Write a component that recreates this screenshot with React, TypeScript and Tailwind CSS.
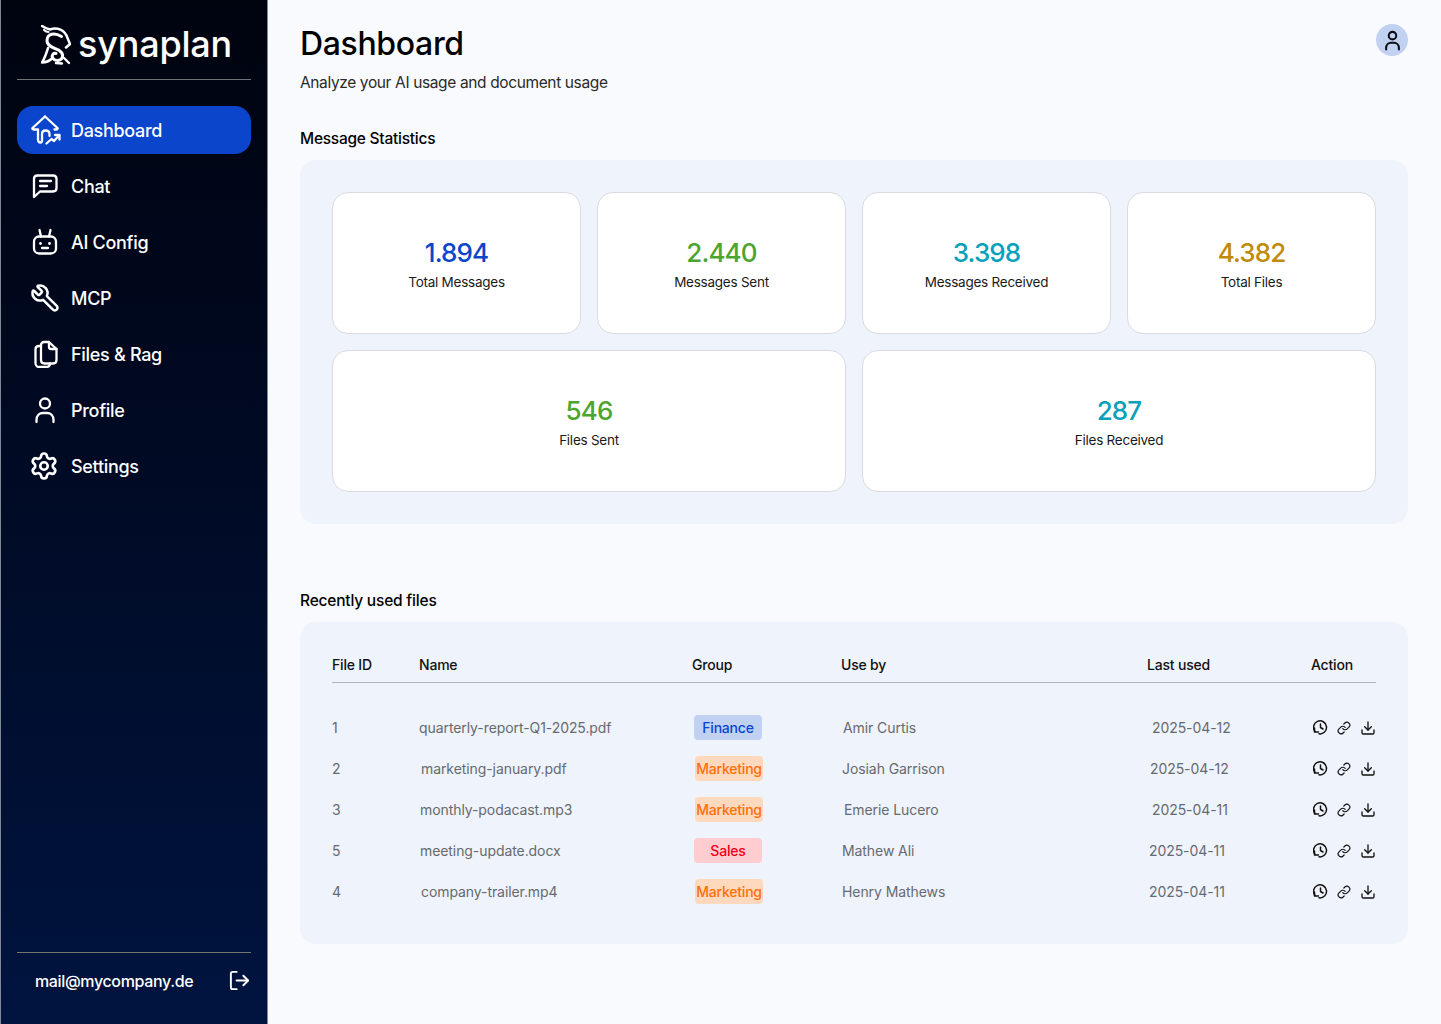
import React from "react";
import { Wrench, Settings, LogOut, Link, Download } from "lucide-react";

function Logo() {
  return (
    <svg width="30" height="40" viewBox="0 0 30 40" fill="none" stroke="white" strokeLinecap="round" strokeLinejoin="round" className="shrink-0">
      <path d="M1 1 C4 3 6 4 9 4.500 C16 1.500 24 5 26.500 13 L29 19 L25 22.500" strokeWidth="2.500" />
      <path d="M3 5 C4 6 6 7 7.500 7" strokeWidth="2.200" />
      <path d="M20.500 11.500 C13 7 6.500 9 6 15 C5.500 20 10 22 14 23.500 C20 25.500 23 29 21 33 C19 36.500 13 36 11.500 32.500 C10.500 30 12.500 27.500 15 28.500" strokeWidth="3" />
      <path d="M7 23 C5.500 28 4 33 1 37.500 C5 37.500 9 35.500 11.500 33" strokeWidth="2.600" />
      <path d="M15 38 L21 38.500 M23 33 L28 38" strokeWidth="2.400" />
    </svg>
  );
}

function HomeChart() {
  return (
    <svg width="30" height="30" viewBox="0 0 30 30" fill="none" stroke="white" strokeWidth="2.300" strokeLinecap="round" strokeLinejoin="round" className="shrink-0">
      <path d="M14 1.500 L1.500 13 C1 14 2 14.500 3 14.500 H7 V24.500 C7 26.500 8 27.500 9.500 27.500 C10.500 27.500 11 26.500 11 25.500 V19 C11 16.500 12.500 15.500 14.500 15.500 C16.500 15.500 18.500 16.500 18.500 19 V21" />
      <path d="M14 1.500 L26.500 13 C27 14 26 14.500 25 14.500 H23.500" />
      <path d="M15.500 28.500 L20.500 24 L23 26 L28 20.500" />
      <path d="M24 20 H28.500 V24.500" />
    </svg>
  );
}

function ChatIcon() {
  return (
    <svg width="28" height="28" viewBox="0 0 28 28" fill="none" stroke="white" strokeWidth="2.300" strokeLinecap="round" strokeLinejoin="round">
      <path d="M3 25 V7 C3 5 4.500 3.500 6.500 3.500 H22 C24 3.500 25.500 5 25.500 7 V16 C25.500 18 24 19.500 22 19.500 H9 Z" />
      <path d="M9 9 H20 M9 14 H16" />
    </svg>
  );
}

function BotIcon() {
  return (
    <svg width="28" height="28" viewBox="0 0 28 28" fill="none" stroke="white" strokeWidth="2.300" strokeLinecap="round" strokeLinejoin="round">
      <path d="M8.500 2 L10 8.500 M19.500 2 L18 8.500" />
      <rect x="3" y="8.500" width="22" height="17" rx="5" />
      <path d="M11 20 H17" />
      <circle cx="9.500" cy="15.500" r="1.400" fill="white" stroke="none" />
      <circle cx="18.500" cy="15.500" r="1.400" fill="white" stroke="none" />
    </svg>
  );
}

function FilesIcon() {
  return (
    <svg width="28" height="28" viewBox="0 0 28 28" fill="none" stroke="white" strokeWidth="2.300" strokeLinecap="round" strokeLinejoin="round">
      <path d="M10 6 H8 C5.500 6 4.500 7.500 4.500 9.500 V23 C4.500 25 6 27 8 27 H15 C17.500 27 19 25.500 19 23.500" />
      <path d="M10 5 C10 3.500 11 2 13 2 H18 L25.500 9 V20 C25.500 22 24 23.500 22 23.500 H13.500 C11.500 23.500 10 22 10 20 Z" />
      <path d="M18 2 V7 C18 8.200 19 9 20 9 H25.500" />
    </svg>
  );
}

function UserIcon({ size = 28, color = "white", sw = 2.3 }: { size?: number; color?: string; sw?: number }) {
  return (
    <svg width={size} height={size} viewBox="0 0 28 28" fill="none" stroke={color} strokeWidth={sw} strokeLinecap="round" strokeLinejoin="round">
      <circle cx="14" cy="7.500" r="5" />
      <path d="M5.500 26 V24 C5.500 19.500 8.500 17 12 17 H16 C19.500 17 22.500 19.500 22.500 24 V26" />
    </svg>
  );
}

function HistoryIcon() {
  return (
    <svg width="15" height="15" viewBox="0 0 15 15" fill="none" stroke="#111" strokeWidth="1.500" strokeLinecap="round" strokeLinejoin="round" className="shrink-0">
      <path d="M6 13.800 A6.500 6.500 0 1 0 2 11.500" />
      <path d="M1.500 8 V12 H5.500" />
      <path d="M7.500 4 V7.500 L10 9" />
    </svg>
  );
}

const nav = [
  { label: "Chat", icon: <ChatIcon /> },
  { label: "AI Config", icon: <BotIcon /> },
  { label: "MCP", icon: <Wrench size={30} strokeWidth={2} color="white" className="shrink-0 -scale-x-100" /> },
  { label: "Files & Rag", icon: <FilesIcon /> },
  { label: "Profile", icon: <UserIcon /> },
  { label: "Settings", icon: <Settings size={30} strokeWidth={2.100} color="white" className="shrink-0 -translate-x-[1px]" /> },
];

const stats = [
  { value: "1.894", label: "Total Messages", color: "text-[#0a45cc]", span: "" },
  { value: "2.440", label: "Messages Sent", color: "text-[#4ca52e]", span: "" },
  { value: "3.398", label: "Messages Received", color: "text-[#08a0bb]", span: "" },
  { value: "4.382", label: "Total Files", color: "text-[#c08a0a]", span: "" },
  { value: "546", label: "Files Sent", color: "text-[#4ca52e]", span: "col-span-2" },
  { value: "287", label: "Files Received", color: "text-[#08a0bb]", span: "col-span-2" },
];

const badgeFinance = "bg-[#c1d1f2] text-[#0a45cc]";
const badgeMarketing = "bg-[#ffd9bd] text-[#ff6f0a]";
const badgeSales = "bg-[#ffccd0] text-[#f00018]";

const rows = [
  { id: "1", name: "quarterly-report-Q1-2025.pdf", nameOff: "pl-0", group: "Finance", badge: badgeFinance, badgeOff: "ml-[2px]", user: "Amir Curtis", userOff: "pl-[2px]", date: "2025-04-12", dateOff: "pl-[5px]" },
  { id: "2", name: "marketing-january.pdf", nameOff: "pl-[2px]", group: "Marketing", badge: badgeMarketing, badgeOff: "ml-[3px]", user: "Josiah Garrison", userOff: "pl-[1px]", date: "2025-04-12", dateOff: "pl-[3px]" },
  { id: "3", name: "monthly-podacast.mp3", nameOff: "pl-[1px]", group: "Marketing", badge: badgeMarketing, badgeOff: "ml-[3px]", user: "Emerie Lucero", userOff: "pl-[3px]", date: "2025-04-11", dateOff: "pl-[5px]" },
  { id: "5", name: "meeting-update.docx", nameOff: "pl-[1px]", group: "Sales", badge: badgeSales, badgeOff: "ml-[2px]", user: "Mathew Ali", userOff: "pl-[1px]", date: "2025-04-11", dateOff: "pl-[2px]" },
  { id: "4", name: "company-trailer.mp4", nameOff: "pl-[2px]", group: "Marketing", badge: badgeMarketing, badgeOff: "ml-[3px]", user: "Henry Mathews", userOff: "pl-[1px]", date: "2025-04-11", dateOff: "pl-[2px]" },
];

const cols = "grid grid-cols-[87px_273px_149px_306px_164px_1fr] items-center";

export default function App() {
  return (
    <div className="flex min-h-[1024px] w-full bg-[#f9fafd] text-black font-['Inter','Liberation_Sans',sans-serif]">
      <aside className="flex w-[268px] shrink-0 flex-col border-x border-[#7f8694] bg-gradient-to-b from-[#00040f] to-[#001440] px-4 text-white">
        <div className="flex h-[80px] items-center justify-center gap-[7px] border-b border-[#6f7378] pl-[5px] pt-[10px]">
          <Logo />
          <span className="text-[36px] font-medium leading-none tracking-[-0.2px] pb-[2px]">synaplan</span>
        </div>
        <nav className="mt-[26px] flex flex-col gap-2">
          <div className="flex h-12 items-center gap-[10px] rounded-2xl bg-[#0a45cc] pl-[14px] text-[18px] font-medium tracking-[-0.3px]">
            <HomeChart />
            <span>Dashboard</span>
          </div>
          {nav.map((n) => (
            <div key={n.label} className="flex h-12 items-center gap-[12px] pl-[14px] text-[18px] font-medium tracking-[-0.3px]">
              <span className="flex h-[28px] w-[28px] items-center justify-center">{n.icon}</span>
              <span>{n.label}</span>
            </div>
          ))}
        </nav>
        <div className="mt-auto flex h-[72px] items-center justify-between border-t border-[#76776a] pb-[16px] pl-[18px] pr-[0px]">
          <span className="text-[16px] font-medium tracking-[-0.35px]">mail@mycompany.de</span>
          <LogOut size={23} strokeWidth={2} color="white" />
        </div>
      </aside>

      <main className="flex-1 pl-8 pr-[33px] pb-20">
        <header className="flex items-start justify-between pt-[24px]">
          <div>
            <h1 className="text-[32px] font-medium leading-[40px] tracking-[-0.35px]">Dashboard</h1>
            <p className="mt-[9px] text-[15.500px] leading-[20px] tracking-[-0.37px] text-[#2a2a2a]">Analyze your AI usage and document usage</p>
          </div>
          <div className="flex h-8 w-8 items-center justify-center rounded-full bg-[#c1d1f2]">
            <UserIcon size={21} color="#0b0b14" sw={2.7} />
          </div>
        </header>

        <h2 className="mt-[36px] text-[15.500px] font-medium leading-[20px] tracking-[-0.25px]">Message Statistics</h2>
        <section className="mt-[11px] rounded-2xl bg-[#eff3fb] p-8">
          <div className="grid grid-cols-4 gap-4">
            {stats.map((s) => (
              <div key={s.label} className={`flex h-[142px] flex-col items-center justify-center rounded-2xl border border-[#d9dbe0] bg-white pt-[4px] ${s.span}`}>
                <div className={`text-[26px] font-medium leading-[32px] tracking-[-0.9px] ${s.color}`}>{s.value}</div>
                <div className="mt-[2px] text-[13.500px] leading-[22px] tracking-[-0.25px] text-[#1a1a1a]">{s.label}</div>
              </div>
            ))}
          </div>
        </section>

        <h2 className="mt-[67px] text-[15.500px] font-medium leading-[20px] tracking-[-0.2px]">Recently used files</h2>
        <section className="mt-[11px] rounded-2xl bg-[#eff3fb] px-8 pb-[32px] pt-[32px]">
          <div className={`${cols} h-[29px] items-start border-b border-[#b3b5b9] text-[14px] font-medium leading-[22px] tracking-[-0.2px] text-[#111]`}>
            <div>File ID</div>
            <div>Name</div>
            <div>Group</div>
            <div>Use by</div>
            <div>Last used</div>
            <div>Action</div>
          </div>
          <div className="mt-[24px] flex flex-col">
            {rows.map((r) => (
              <div key={r.name} className={`${cols} h-[41px] text-[14px] tracking-[-0.08px] text-[#666a70]`}>
                <div>{r.id}</div>
                <div className={r.nameOff}>{r.name}</div>
                <div>
                  <span className={`flex h-[25px] w-[68px] items-center justify-center rounded-[4px] font-medium tracking-[-0.2px] ${r.badge} ${r.badgeOff}`}>{r.group}</span>
                </div>
                <div className={r.userOff}>{r.user}</div>
                <div className={r.dateOff}>{r.date}</div>
                <div className="flex items-center gap-[9px] pl-[2px] text-[#111]">
                  <HistoryIcon />
                  <Link size={14} strokeWidth={2} />
                  <Download size={16} strokeWidth={2} />
                </div>
              </div>
            ))}
          </div>
        </section>
      </main>
    </div>
  );
}
